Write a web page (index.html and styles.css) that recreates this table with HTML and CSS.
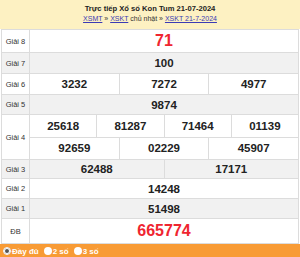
FILE: index.html
```html
<!DOCTYPE html>
<html>
<head>
<meta charset="utf-8">
<link rel="stylesheet" href="styles.css">
</head>
<body>
<div class="box">
  <div class="head">
    <div class="title">Trực tiếp Xổ số Kon Tum 21-07-2024</div>
    <div class="links"><a href="#">XSMT</a> » <a href="#">XSKT</a> chủ nhật » <a href="#">XSKT 21-7-2024</a></div>
  </div>
  <div class="kq">
    <div class="row h8"><div class="lbl">Giải 8</div><div class="vals"><div class="line"><div class="cell red">71</div></div></div></div>
    <div class="row alt h7"><div class="lbl">Giải 7</div><div class="vals"><div class="line"><div class="cell">100</div></div></div></div>
    <div class="row h6"><div class="lbl">Giải 6</div><div class="vals"><div class="line"><div class="cell">3232</div><div class="cell">7272</div><div class="cell">4977</div></div></div></div>
    <div class="row alt h5"><div class="lbl">Giải 5</div><div class="vals"><div class="line"><div class="cell">9874</div></div></div></div>
    <div class="row h4"><div class="lbl">Giải 4</div><div class="vals">
      <div class="line l1"><div class="cell">25618</div><div class="cell">81287</div><div class="cell">71464</div><div class="cell">01139</div></div>
      <div class="line l2"><div class="cell">92659</div><div class="cell">02229</div><div class="cell">45907</div></div>
    </div></div>
    <div class="row alt h3"><div class="lbl">Giải 3</div><div class="vals"><div class="line"><div class="cell">62488</div><div class="cell">17171</div></div></div></div>
    <div class="row h2"><div class="lbl">Giải 2</div><div class="vals"><div class="line"><div class="cell">14248</div></div></div></div>
    <div class="row alt h1"><div class="lbl">Giải 1</div><div class="vals"><div class="line"><div class="cell">51498</div></div></div></div>
    <div class="row hdb"><div class="lbl">ĐB</div><div class="vals"><div class="line"><div class="cell red db">665774</div></div></div></div>
  </div>
  <div class="foot">
    <label class="opt"><span class="radio on"></span>Đầy đủ</label>
    <label class="opt"><span class="radio"></span>2 số</label>
    <label class="opt"><span class="radio"></span>3 số</label>
  </div>
</div>
</body>
</html>
```
FILE: styles.css
```css
* { box-sizing: border-box; }
html, body { margin: 0; padding: 0; background: #fff; }
body { font-family: "Liberation Sans", Arial, sans-serif; width: 300px; height: 257px; overflow: hidden; }
.box { width: 300px; }
.head {
  height: 29px;
  background: #fdf1c2;
  text-align: center;
  padding-top: 4px;
  color: #222;
}
.title { font-weight: bold; font-size: 7.6px; line-height: 9px; }
.links { font-size: 7px; line-height: 9px; margin-top: 1px; color: #333; }
.links a { color: #3b3bb5; text-decoration: underline; }
.kq {
  margin: 0 1px;
  border-top: 1px solid #dcdcdc;
  border-left: 1px solid #dcdcdc;
  border-right: 1px solid #dcdcdc;
}
.row { display: flex; border-bottom: 1px solid #dcdcdc; background: #fff; }
.row.alt { background: #f1f1f1; }
.lbl {
  width: 28px;
  flex: none;
  border-right: 1px solid #dcdcdc;
  font-size: 7.5px;
  color: #333;
  display: flex;
  align-items: center;
  justify-content: center;
}
.vals { flex: 1; display: flex; flex-direction: column; }
.line { flex: 1; display: flex; }
.l1 { border-bottom: 1px solid #dcdcdc; }
.cell {
  flex: 1 1 0;
  display: flex;
  align-items: center;
  justify-content: center;
  font-weight: bold;
  font-size: 11.5px;
  color: #222;
}
.cell + .cell { border-left: 1px solid #dcdcdc; }
.red { color: #ef2530; font-size: 16px; }
.h8 { height: 23px; }
.h7 { height: 21px; }
.h6 { height: 21px; }
.h5 { height: 20px; }
.h4 { height: 45px; }
.h3 { height: 19px; }
.h2 { height: 20px; }
.h1 { height: 20px; }
.hdb { height: 25px; }
.foot {
  height: 14px;
  background: #f89b35;
  display: flex;
  align-items: center;
  padding-left: 3px;
  gap: 5px;
  color: #fff;
  font-weight: bold;
  font-size: 8px;
}
.opt { display: flex; align-items: center; gap: 1px; }
.radio {
  width: 8px; height: 8px;
  border-radius: 50%;
  background: #fff;
  display: inline-block;
}
.radio.on { border: 1px solid #fff; background: #555; box-shadow: inset 0 0 0 1px #fff; }
```
